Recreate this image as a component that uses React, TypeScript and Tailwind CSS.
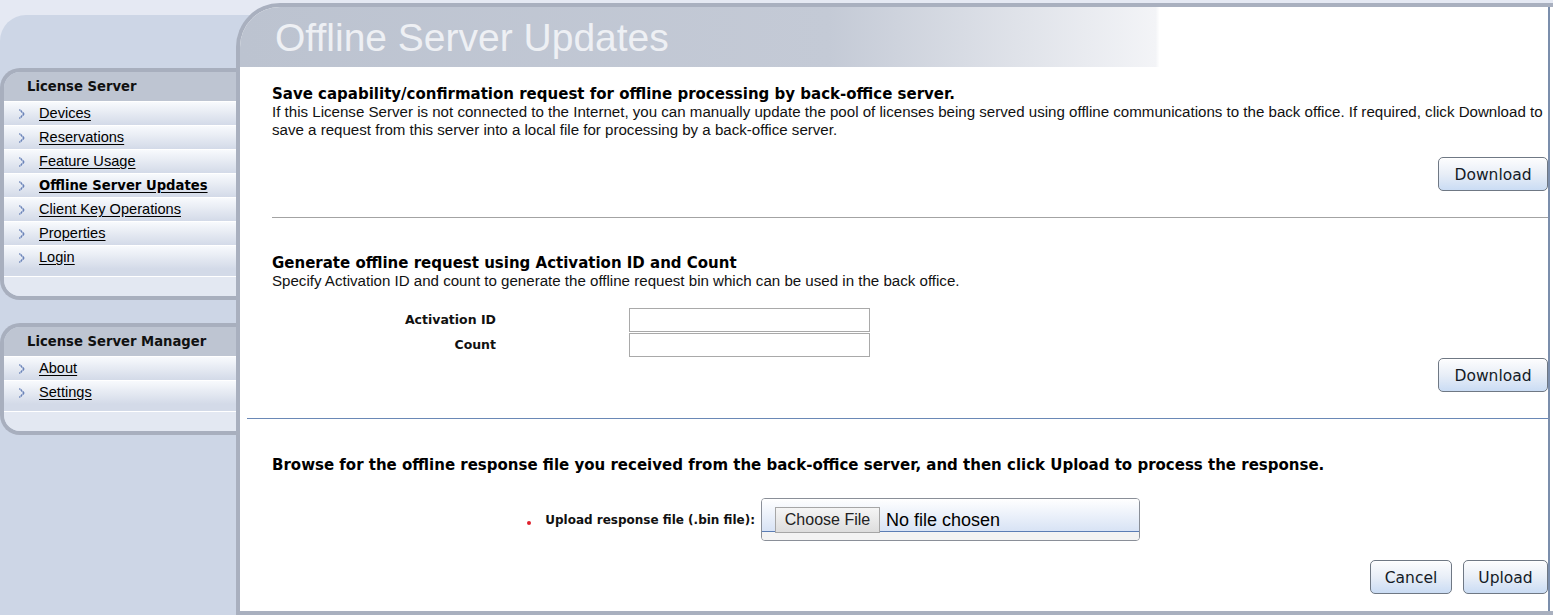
import React from "react";

// bold text in the original is Tahoma Bold, DejaVu Sans Bold has the closest widths
const bold = "font-['DejaVu_Sans',Verdana,sans-serif] font-bold";

type NavLink = { label: string; active?: boolean };

const licenseLinks: NavLink[] = [
  { label: "Devices" },
  { label: "Reservations" },
  { label: "Feature Usage" },
  { label: "Offline Server Updates", active: true },
  { label: "Client Key Operations" },
  { label: "Properties" },
  { label: "Login" },
];

const managerLinks: NavLink[] = [{ label: "About" }, { label: "Settings" }];

function Chevron() {
  const rows = [0, 1, 2, 3, 4, 3, 2, 1, 0];
  return (
    <svg width="6" height="10" viewBox="0 0 6 9" className="shrink-0">
      {rows.map((x, y) => (
        <g key={y}>
          <rect x={x} y={y} width="1" height="1" fill={y % 2 ? "#7890c2" : "#4463a3"} />
          <rect x={x + 1} y={y} width="1" height="1" fill={y % 2 ? "#4463a3" : "#9aaed6"} />
        </g>
      ))}
    </svg>
  );
}

function NavBox({ title, links, className = "" }: { title: string; links: NavLink[]; className?: string }) {
  return (
    <div className={`border-4 border-r-0 border-[#a8afbe] rounded-l-[20px] overflow-hidden ${className}`}>
      <div className={`h-[29px] bg-[#bec5d2] pl-[23px] flex items-center text-[13.2px] text-[#111] ${bold}`}>
        {title}
      </div>
      {links.map((link) => (
        <div
          key={link.label}
          className="h-[24px] border-t border-white bg-[linear-gradient(to_bottom,#f8fafd,#d3dae8)] flex items-center pl-[15px]"
        >
          <Chevron />
          <a
            href="#"
            className={`ml-[14px] text-black underline underline-offset-2 leading-none ${
              link.active ? `text-[13.2px] ${bold}` : "text-[14.6px]"
            }`}
          >
            {link.label}
          </a>
        </div>
      ))}
      <div className="h-[7px] bg-[#d3dae8]" />
      <div className="h-[20px] border-t border-white bg-[#e3e8f2]" />
    </div>
  );
}

function Button({ children, className = "" }: { children: React.ReactNode; className?: string }) {
  return (
    <button
      className={`h-[34px] pt-[3px] rounded-[5px] border border-[#6f7884] bg-[linear-gradient(to_bottom,#fdfdfe,#e8eef7_50%,#cadcf4)] shadow-[inset_0_1px_0_#fff] font-['DejaVu_Sans',Verdana,sans-serif] text-[15.5px] text-[#141b26] ${className}`}
    >
      {children}
    </button>
  );
}

function Sidebar() {
  return (
    <aside className="w-[236px] shrink-0 pt-[53px]">
      <NavBox title="License Server" links={licenseLinks} />
      <NavBox title="License Server Manager" links={managerLinks} className="mt-[23px]" />
    </aside>
  );
}

function MainPanel() {
  return (
    <main className="flex-1 -mt-[12px] h-[612px] border-l-4 border-t-4 border-b-4 border-[#a9b0bf] rounded-tl-[44px] bg-white overflow-hidden">
      <div className="h-full mr-[3px] border-r-2 border-[#7b8eac] flex flex-col">
        <div className="h-[60px] shrink-0 flex items-center pl-[35px] bg-[linear-gradient(to_right,#bcc3d0_0%,#c4cad6_45%,#f3f4f7_70%,#ffffff_70.3%)]">
          <h1 className="text-[39px] leading-none text-[#eef0f4]">Offline Server Updates</h1>
        </div>

        <div className="pl-[32px] text-[15.1px] text-[#111]">
          {/* capability request */}
          <h2 className={`mt-[18px] text-[15px] leading-[18px] text-black ${bold}`}>
            Save capability/confirmation request for offline processing by back-office server.
          </h2>
          <p className="leading-[18px]">
            If this License Server is not connected to the Internet, you can manually update the pool of licenses
            being served using offline communications to the back office. If required, click Download to save a
            request from this server into a local file for processing by a back-office server.
          </p>
          <div className="mt-[18px] flex justify-end">
            <Button className="w-[110px]">Download</Button>
          </div>
          <div className="mt-[26px] h-px bg-[#a3a3a3]" />

          {/* activation id request */}
          <h2 className={`mt-[36px] text-[15px] leading-[18px] text-black ${bold}`}>
            Generate offline request using Activation ID and Count
          </h2>
          <p className="leading-[18px]">
            Specify Activation ID and count to generate the offline request bin which can be used in the back office.
          </p>
          <div className="mt-[18px] flex flex-col gap-[1px]">
            <div className="flex items-center">
              <label className={`w-[224px] text-right text-[12.5px] ${bold}`}>Activation ID</label>
              <input className="ml-[133px] w-[241px] h-[24px] border border-[#a9a9a9] outline-none px-1" />
            </div>
            <div className="flex items-center">
              <label className={`w-[224px] text-right text-[12.5px] ${bold}`}>Count</label>
              <input className="ml-[133px] w-[241px] h-[24px] border border-[#a9a9a9] outline-none px-1" />
            </div>
          </div>
          <div className="mt-[1px] flex justify-end">
            <Button className="w-[110px]">Download</Button>
          </div>
          <div className="mt-[26px] -ml-[25px] h-px bg-[#6a88b6]" />

          {/* upload response */}
          <h2 className={`mt-[37px] text-[15px] leading-[18px] text-black ${bold}`}>
            Browse for the offline response file you received from the back-office server, and then click Upload to
            process the response.
          </h2>
          <div className="mt-[24px] flex items-center">
            <div className="w-[483px] flex justify-end items-center">
              <span className="w-[4px] h-[4px] rounded-full bg-[#e0202c] mt-[6px]" />
              <span className={`ml-[14px] text-[12px] ${bold}`}>Upload response file (.bin file):</span>
            </div>
            <div className="ml-[6px] w-[379px] h-[43px] rounded-[4px] border border-[#8a8f98] overflow-hidden flex flex-col">
              <div className="h-[33px] shrink-0 flex items-start pt-[8px] pl-[13px] border-b border-[#5b7db4] bg-[linear-gradient(to_bottom,#ffffff,#d8e3f5)]">
                <span className="relative h-[26px] w-[105px] flex items-center justify-center border border-[#a6a6a6] bg-[linear-gradient(to_bottom,#f5f5f5,#dddddd)] text-[16px] text-[#222]">
                  Choose File
                </span>
                <span className="ml-[6px] mt-[2px] text-[18px] leading-[22px] text-black">No file chosen</span>
              </div>
              <div className="flex-1 bg-[#f3f3f3]" />
            </div>
          </div>
          <div className="mt-[19px] flex justify-end gap-[11px]">
            <Button className="w-[82px]">Cancel</Button>
            <Button className="w-[85px]">Upload</Button>
          </div>
        </div>
      </div>
    </main>
  );
}

export default function App() {
  return (
    <div className="w-[1553px] h-[615px] overflow-hidden bg-[#e5e9f3] pt-[15px] font-['Liberation_Sans',Arial,sans-serif] text-black">
      <div className="flex h-[600px] bg-[#cdd6e6] rounded-tl-[26px]">
        <Sidebar />
        <MainPanel />
      </div>
    </div>
  );
}
